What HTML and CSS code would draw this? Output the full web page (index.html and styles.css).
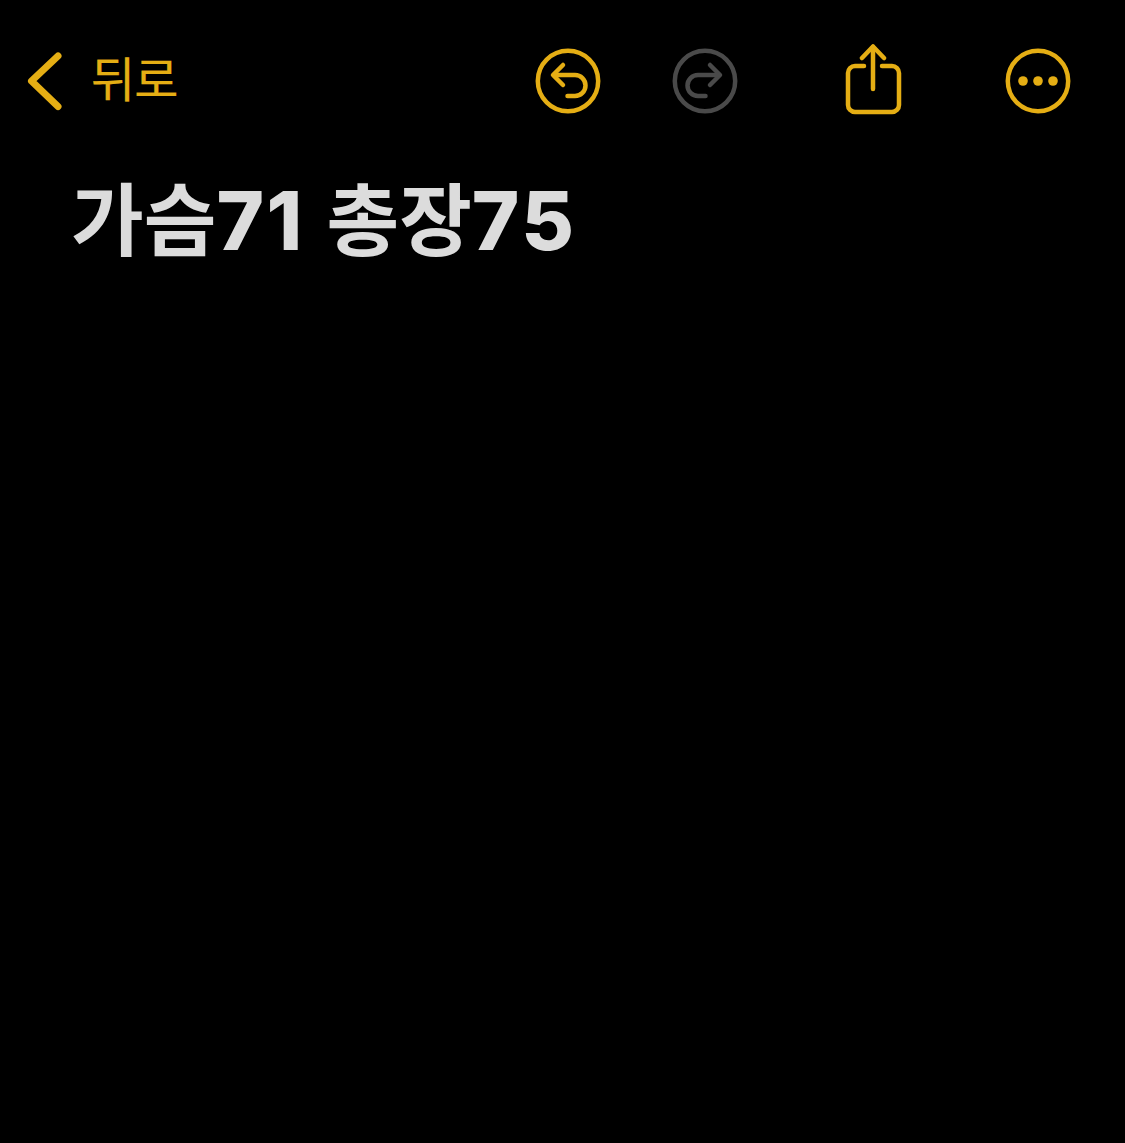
FILE: index.html
```html
<!DOCTYPE html>
<html lang="ko">
<head>
<meta charset="utf-8">
<title>메모</title>
<link rel="stylesheet" href="styles.css">
</head>
<body>
<main class="screen">
  <header class="toolbar">
    <a class="back">
      <svg class="chevron" width="36" height="60" viewBox="0 0 36 60" fill="none"><path d="M32 5 5.500 30 32 55.500" stroke="#e5ae14" stroke-width="7" stroke-linecap="round" stroke-linejoin="round"/></svg>
      <span class="back-label">뒤로</span>
    </a>
    <div class="actions">
      <svg class="icon undo" width="66" height="66" viewBox="0 0 66 66" fill="none" stroke="#e5ae14" stroke-width="4.500" stroke-linecap="round" stroke-linejoin="round"><circle cx="33" cy="33" r="30.200"/><path d="M28 17 18 27l10 10"/><path d="M19 27h21a10.500 10.500 0 0 1 0 21h-7.500"/></svg>
      <svg class="icon redo" width="66" height="66" viewBox="0 0 66 66" fill="none" stroke="#4a4a4a" stroke-width="4.500" stroke-linecap="round" stroke-linejoin="round"><circle cx="33" cy="33" r="30.200"/><path d="M38 17l10 10-10 10"/><path d="M47 27H26a10.500 10.500 0 0 0 0 21h7.500"/></svg>
      <svg class="icon share" width="58" height="74" viewBox="0 0 58 74" fill="none" stroke="#e5ae14" stroke-width="4.500" stroke-linecap="round" stroke-linejoin="round"><path d="M29 3v42"/><path d="M18 14 29 2.500 40 14"/><path d="M20 22h-9a7 7 0 0 0-7 7v32a7 7 0 0 0 7 7h37a7 7 0 0 0 7-7V29a7 7 0 0 0-7-7h-10"/></svg>
      <svg class="icon more" width="66" height="66" viewBox="0 0 66 66" fill="none"><circle cx="33" cy="33" r="30.200" stroke="#e5ae14" stroke-width="4.500"/><circle cx="18" cy="33" r="4.800" fill="#e5ae14"/><circle cx="33" cy="33" r="4.800" fill="#e5ae14"/><circle cx="48" cy="33" r="4.800" fill="#e5ae14"/></svg>
    </div>
  </header>
  <h1 class="note-title">가슴<span class="num">71</span> 총장<span class="num">75</span></h1>
</main>
</body>
</html>
```
FILE: styles.css
```css
* { box-sizing: border-box; }
html, body { margin: 0; background: #000; }
.screen { width: 1125px; height: 1143px; background: #000; overflow: hidden; padding: 44px 0 0 26px; }
.toolbar { display: flex; align-items: flex-start; height: 74px; }
.back { display: flex; align-items: flex-start; gap: 29px; width: 509px; height: 74px; }
.chevron { flex: none; margin-top: 7px; }
.back-label { font-family: "Noto Sans CJK KR", sans-serif; font-size: 48px; line-height: 70px; color: #e5ae14; letter-spacing: -1px; margin-top: -3px; -webkit-text-stroke: 0.2px #e5ae14; }
.actions { display: flex; align-items: flex-start; height: 74px; }
.icon { flex: none; display: block; }
.undo { margin-right: 71px; margin-top: 4px; }
.redo { margin-right: 106px; margin-top: 4px; }
.share { margin-right: 103px; }
.more { margin-top: 4px; }
.note-title { margin: 57px 0 0 45px; font-family: Inter, "Noto Sans CJK KR", sans-serif; font-size: 79px; line-height: 92px; font-weight: 700; color: #dcdcdc; white-space: nowrap; word-spacing: 3px; }
.num { font-size: 81px; font-weight: 800; letter-spacing: 2.500px; }
```
